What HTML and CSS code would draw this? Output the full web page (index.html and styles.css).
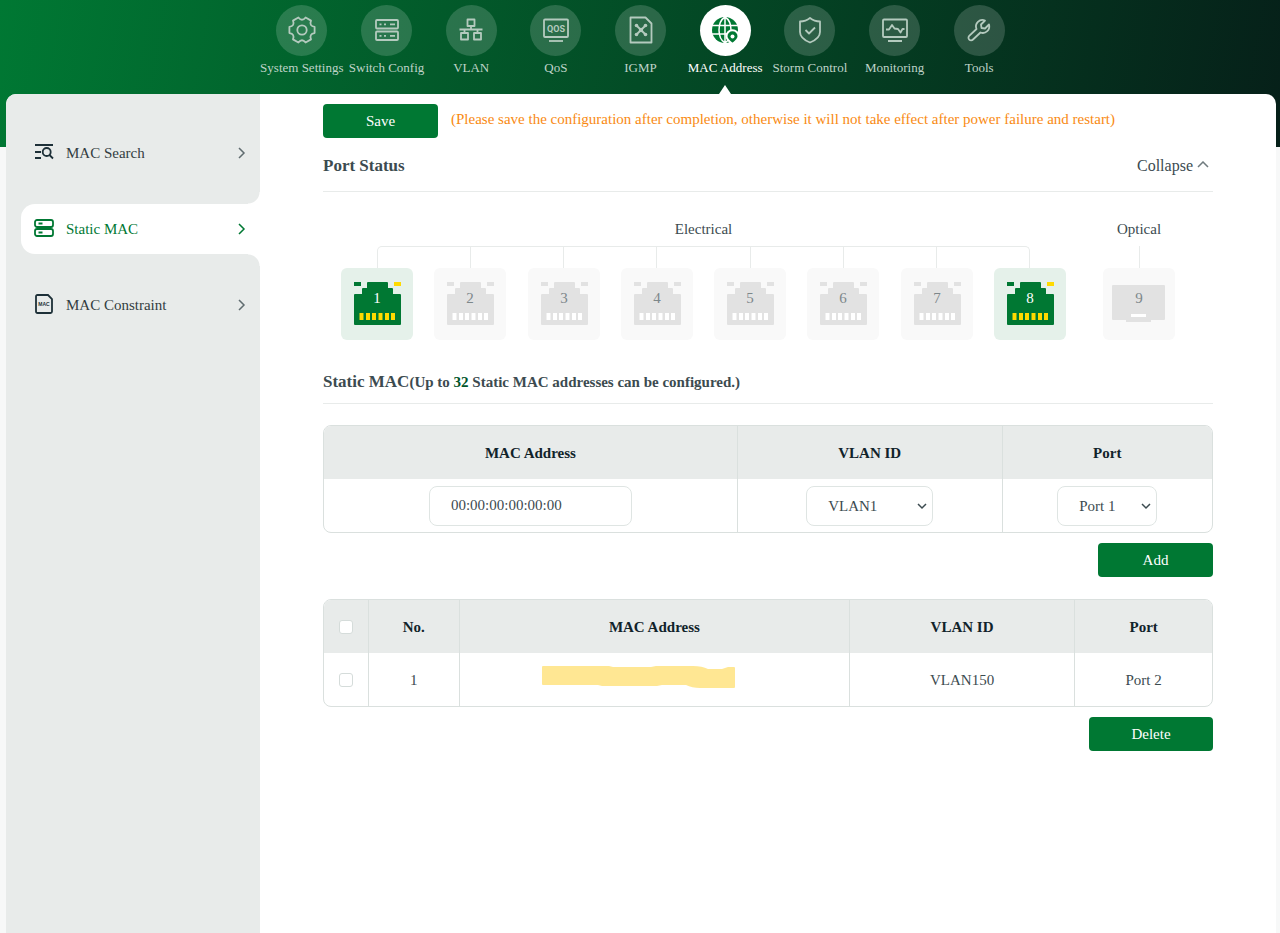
FILE: index.html
```html
<!DOCTYPE html>
<html lang="en">
<head>
<meta charset="utf-8">
<title>Static MAC</title>
<link rel="stylesheet" href="styles.css">
</head>
<body>
<svg class="defs" aria-hidden="true">
  <symbol id="port" viewBox="0 0 72 72">
    <rect class="led-left" x="13" y="14" width="7" height="4"/>
    <rect class="led-right" x="53" y="14" width="7" height="4"/>
    <path class="jack" d="M26 15q0-1 1-1h19q1 0 1 1v5h4q1 0 1 1v5h7q1 0 1 1v29q0 1-1 1H14q-1 0-1-1V27q0-1 1-1h7v-5q0-1 1-1h4z"/>
    <path class="pins" d="M18.500 45h4v7h-4zM25 45h4v7h-4zM31 45h4v7h-4zM37.500 45h4v7h-4zM44 45h4v7h-4zM50 45h4v7h-4z"/>
  </symbol>
</svg>
<header class="top">
  <nav class="menu" aria-label="Main">
    <a class="menu-item" href="#"><span class="disc"><svg viewBox="-14 -14 28 28"><path d="M12.600 3.100Q6.900 4 9 9.350L3.600 12.500Q0 8-3.600 12.500L-9 9.350Q-6.900 4-12.600 3.100V-3.100Q-6.900-4-9-9.350L-3.600-12.500Q0-8 3.600-12.500L9-9.350Q6.900-4 12.600-3.100Z"/><circle r="4.700"/></svg></span>System Settings</a>
    <a class="menu-item" href="#"><span class="disc"><svg viewBox="0 0 28 28"><rect x="3" y="4" width="22" height="8.500" rx="1"/><rect x="3" y="15.500" width="22" height="8.500" rx="1"/><path d="M6.500 8.300h2M11 8.300h2M17 8.300h5M6.500 19.800h2M11 19.800h2M17 19.800h5"/></svg></span>Switch Config</a>
    <a class="menu-item" href="#"><span class="disc"><svg viewBox="0 0 28 28"><path d="M10.500 3.500h7V10h-7zM4 17h7v6.500H4zM17 17h7v6.500h-7zM14 10v3.500M2.500 13.500h23M7.500 13.500V17M20.500 13.500V17"/></svg></span>VLAN</a>
    <a class="menu-item" href="#"><span class="disc"><svg viewBox="0 0 28 28"><rect x="2" y="3.500" width="24" height="17.500" rx="1"/><path d="M7 25h14"/><text class="qos" x="14" y="15.500">QOS</text></svg></span>QoS</a>
    <a class="menu-item" href="#"><span class="disc"><svg viewBox="0 0 28 28"><path d="M3.500 1.500h15l6 6v19h-21z"/><path d="M9.500 9.500l9 9M18.500 9.500l-9 9"/><g class="solid"><circle cx="9.500" cy="9.500" r="1.800"/><circle cx="18.500" cy="9.500" r="1.800"/><circle cx="9.500" cy="18.500" r="1.800"/><circle cx="18.500" cy="18.500" r="1.800"/><circle cx="14" cy="14" r="2.200"/></g></svg></span>IGMP</a>
    <a class="menu-item current" href="#" aria-current="page"><span class="disc"><svg viewBox="0 0 28 28"><circle class="globe" cx="14" cy="14" r="13"/><path class="grid" d="M0 9.500h28M0 18h28M14 0v28M14 1C6 6 6 22 14 27M14 1c8 5 8 21 0 26"/><path class="pin" d="M21.500 28c-2.500-1.800-6-4.200-6-7.700a6 6 0 0 1 12 0c0 3.500-3.500 5.900-6 7.700z"/><circle class="hole" cx="21.500" cy="20.500" r="2"/></svg></span>MAC Address</a>
    <a class="menu-item" href="#"><span class="disc"><svg viewBox="0 0 28 28"><path d="M14 2c3 2.500 6 3.500 10 3.500V16c0 5-5 8.500-10 10.500C9 24.500 4 21 4 16V5.500C8 5.500 11 4.500 14 2zM9.500 14l3.500 3.500 6-6"/></svg></span>Storm Control</a>
    <a class="menu-item" href="#"><span class="disc"><svg viewBox="0 0 28 28"><rect x="2" y="3.500" width="24" height="17.500" rx="1"/><path d="M7 25h14M5 13.500h3l3-4.500 2.500 3.500 3.500.5 2.500 3.500 2-3.500h2"/></svg></span>Monitoring</a>
    <a class="menu-item" href="#"><span class="disc"><svg viewBox="0 0 28 28"><path d="M20 4.500l-4 4 .5 3.500 3.500.5 4-4a6.500 6.500 0 0 1-8.500 8L8 23.500a2.500 2.500 0 0 1-3.800-3.700L11.500 13A6.500 6.500 0 0 1 20 4.500z"/></svg></span>Tools</a>
  </nav>
</header>
<div class="panel">
  <aside class="side">
    <a class="side-item" href="#"><svg class="icon" viewBox="0 0 20 20"><path d="M1 3h18M1 10h6M1 16h6M15.500 13l3.500 3.500"/><circle cx="12.700" cy="10" r="4"/></svg><span>MAC Search</span><svg class="arrow" viewBox="0 0 10 12"><path d="M2 1l5 5-5 5"/></svg></a>
    <a class="side-item active" href="#" aria-current="page"><svg class="icon" viewBox="0 0 20 20"><rect x="1" y="2" width="18" height="7" rx="2"/><rect x="1" y="11" width="18" height="7" rx="2"/><path d="M4.500 5.500h4M4.500 14.500h4"/></svg><span>Static MAC</span><svg class="arrow" viewBox="0 0 10 12"><path d="M2 1l5 5-5 5"/></svg></a>
    <a class="side-item" href="#"><svg class="icon" viewBox="0 0 20 20"><path d="M3.500 1H14l4 4v12.500q0 1.500-1.500 1.500h-13Q2 19 2 17.500v-15Q2 1 3.500 1z"/><text class="mac" x="10" y="12">MAC</text></svg><span>MAC Constraint</span><svg class="arrow" viewBox="0 0 10 12"><path d="M2 1l5 5-5 5"/></svg></a>
  </aside>
  <main class="main">
    <div class="save-row"><button class="btn" type="button">Save</button><p class="notice">(Please save the configuration after completion, otherwise it will not take effect after power failure and restart)</p></div>
    <div class="head"><h2>Port Status</h2><button class="collapse" type="button">Collapse<svg viewBox="0 0 12 8"><path d="M1 6l5-5 5 5"/></svg></button></div>
    <div class="ports">
      <section class="electrical">
        <h3>Electrical</h3>
        <div class="bracket"><i></i><i></i><i></i><i></i><i></i><i></i></div>
        <div class="tiles">
          <svg class="tile up" viewBox="0 0 72 72"><use href="#port"/><text x="36" y="35">1</text></svg>
          <svg class="tile" viewBox="0 0 72 72"><use href="#port"/><text x="36" y="35">2</text></svg>
          <svg class="tile" viewBox="0 0 72 72"><use href="#port"/><text x="36" y="35">3</text></svg>
          <svg class="tile" viewBox="0 0 72 72"><use href="#port"/><text x="36" y="35">4</text></svg>
          <svg class="tile" viewBox="0 0 72 72"><use href="#port"/><text x="36" y="35">5</text></svg>
          <svg class="tile" viewBox="0 0 72 72"><use href="#port"/><text x="36" y="35">6</text></svg>
          <svg class="tile" viewBox="0 0 72 72"><use href="#port"/><text x="36" y="35">7</text></svg>
          <svg class="tile up" viewBox="0 0 72 72"><use href="#port"/><text x="36" y="35">8</text></svg>
        </div>
      </section>
      <section class="optical">
        <h3>Optical</h3>
        <div class="stem"></div>
        <svg class="tile" viewBox="0 0 72 72"><path class="jack" d="M10 17h51q1 0 1 1v33q0 1-1 1H48v2H23v-2H10q-1 0-1-1V18q0-1 1-1z"/><path class="pins" d="M28 46h15v3H28z"/><text x="36" y="35">9</text></svg>
      </section>
    </div>
    <div class="head static-head"><h2>Static MAC<small>(Up to <b>32</b> Static MAC addresses can be configured.)</small></h2></div>
    <table class="grid-table form-table">
      <colgroup><col class="w-mac"><col class="w-vlan"><col></colgroup>
      <thead><tr><th>MAC Address</th><th>VLAN ID</th><th>Port</th></tr></thead>
      <tbody><tr>
        <td><input class="field" type="text" value="00:00:00:00:00:00" aria-label="MAC Address"></td>
        <td><span class="pick"><select class="field vlan" aria-label="VLAN ID"><option>VLAN1</option><option>VLAN150</option></select><svg viewBox="0 0 10 8"><path d="M1 2l4 4 4-4"/></svg></span></td>
        <td><span class="pick"><select class="field port-no" aria-label="Port"><option>Port 1</option><option>Port 2</option></select><svg viewBox="0 0 10 8"><path d="M1 2l4 4 4-4"/></svg></span></td>
      </tr></tbody>
    </table>
    <div class="actions"><button class="btn" type="button">Add</button></div>
    <table class="grid-table">
      <colgroup><col class="c-check"><col class="c-no"><col class="c-mac"><col class="c-vlan"><col></colgroup>
      <thead><tr><th><input class="check" type="checkbox" aria-label="Select all"></th><th>No.</th><th>MAC Address</th><th>VLAN ID</th><th>Port</th></tr></thead>
      <tbody><tr><td><input class="check" type="checkbox" aria-label="Select row 1"></td><td>1</td><td><svg class="marker" viewBox="0 0 225 24"><path d="M1 1h66l4 1h38l5-1h37q9 0 15 3h14l6-2h6q1 0 1 1v19q0 1-1 1h-34q-8 0-14-3h-24l-5 1H60l-4-1H1q-1 0-1-1V2q0-1 1-1z"/></svg></td><td>VLAN150</td><td>Port 2</td></tr></tbody>
    </table>
    <div class="actions"><button class="btn wide" type="button">Delete</button></div>
  </main>
</div>
</body>
</html>
```
FILE: styles.css
```css
* { box-sizing: border-box; }
body {
  margin: 0;
  min-height: 100vh;
  display: flex;
  flex-direction: column;
  background: #f7f8f8 linear-gradient(100deg, #007833, #062019) no-repeat top / 100% 147px;
  font: 15px/20px "Liberation Serif", "Times New Roman", serif;
  color: #3c4b50;
}
.defs { position: absolute; width: 0; height: 0; }
svg { fill: none; flex: none; }
h2, h3, p { margin: 0; }
a { color: inherit; text-decoration: none; }
button, input, select { font: inherit; color: inherit; }

.menu {
  display: flex;
  max-width: 763px;
  height: 94px;
  margin: 0 auto;
  padding: 5px 0 0 1px;
}
.menu-item {
  flex: 1;
  display: flex;
  flex-direction: column;
  align-items: center;
  gap: 2px;
  font-size: 13px;
  white-space: nowrap;
  color: #bfd3c8;
}
.disc {
  display: grid;
  place-items: center;
  width: 51px;
  height: 51px;
  padding-bottom: 1px;
  border-radius: 50%;
  background: rgba(255, 255, 255, .16);
}
.disc svg {
  width: 28px;
  height: 28px;
  stroke: #b4cabe;
  stroke-width: 1.800;
  stroke-linejoin: round;
  overflow: visible;
}
.disc .solid { fill: #b4cabe; stroke: none; }
.disc .qos {
  font: bold 9px Roboto, sans-serif;
  fill: #b4cabe;
  stroke: none;
  text-anchor: middle;
}
.current { color: #fff; }
.current .disc { background: #fff; }
.current::after {
  content: "";
  margin-top: auto;
  border: 6px solid transparent;
  border-top: 0;
  border-bottom: 9px solid #fff;
}
.disc .globe { fill: #007833; stroke: none; }
.disc .grid { stroke: #fff; stroke-width: 1.500; }
.disc .pin { fill: #007833; stroke: #fff; stroke-width: 2; }
.disc .hole { fill: #fff; stroke: none; }

.panel {
  flex: 1;
  display: flex;
  margin: 0 4px 0 6px;
  border-radius: 10px 10px 0 0;
  background: #fff;
  overflow: hidden;
}
.side {
  width: 254px;
  flex: none;
  display: flex;
  flex-direction: column;
  gap: 26px;
  padding: 34px 0 0 15px;
  background: #e8ebea;
}
.side-item {
  position: relative;
  display: flex;
  align-items: center;
  gap: 12px;
  height: 50px;
  padding: 0 13px;
  color: #333d41;
}
.side-item span { flex: 1; }
.icon { width: 20px; height: 20px; margin-bottom: 2px; stroke: #1d3038; stroke-width: 1.800; }
.arrow { width: 10px; height: 12px; stroke: #606c70; stroke-width: 1.500; }
.side-item .mac {
  font: bold 5px "Liberation Sans", sans-serif;
  fill: #1d3038;
  stroke: none;
  text-anchor: middle;
}
.active { background: #fff; color: #007833; border-radius: 14px 0 0 14px; }
.active svg { stroke: #007833; }
.active::before, .active::after {
  content: "";
  position: absolute;
  right: 0;
  width: 12px;
  height: 12px;
}
.active::before { top: -12px; background: radial-gradient(circle at 0 0, transparent 11px, #fff 12px); }
.active::after { bottom: -12px; background: radial-gradient(circle at 0 100%, transparent 11px, #fff 12px); }

.main { flex: 1; padding: 10px 63px 24px; }
.save-row { display: flex; gap: 13px; }
.notice { padding-top: 5px; color: #f98a12; }
.btn {
  min-width: 115px;
  height: 34px;
  border: 0;
  border-radius: 4px;
  background: #007833;
  color: #fff;
}
.wide { min-width: 124px; }
.head {
  display: flex;
  justify-content: space-between;
  align-items: center;
  height: 54px;
  padding-top: 2px;
  border-bottom: 1px solid #e8ebea;
}
h2 { font-size: 17px; line-height: 20px; color: #3c4b50; }
h2 small { font-size: 15px; }
h2 b { color: #00552a; }
.collapse {
  display: flex;
  align-items: center;
  gap: 4px;
  padding: 0 4px 0 0;
  border: 0;
  background: none;
  font-size: 16px;
}
.collapse svg { width: 12px; height: 8px; margin-bottom: 2px; stroke: #707b7f; stroke-width: 1.500; }
.ports {
  display: flex;
  gap: 37px;
  padding: 27px 38px 21px 18px;
}
.electrical { flex: 1; }
h3 { font-size: 15px; font-weight: normal; line-height: 20px; text-align: center; }
.bracket {
  display: flex;
  justify-content: space-evenly;
  height: 22px;
  margin: 7px 36px 0;
  border: 1px solid #e8ebea;
  border-bottom: 0;
  border-radius: 5px 5px 0 0;
}
.bracket i, .stem { width: 1px; height: 21px; background: #e8ebea; }
.stem { height: 22px; margin: 7px auto 0; }
.tiles { display: flex; justify-content: space-between; }
.tile {
  display: block;
  width: 72px;
  height: 72px;
  border-radius: 6px;
  background: #f9f9f9;
  --body: #e2e2e2;
  --pin: #fff;
  --led: #e2e2e2;
}
.up { background: #e5f1ea; --body: #007833; --pin: #ffda00; --led: #ffda00; }
.tile text { font-size: 15px; fill: #7d878a; text-anchor: middle; }
.up text { fill: #fff; }
.jack, .led-left { fill: var(--body); }
.led-right { fill: var(--led); }
.pins { fill: var(--pin); }

.static-head { height: 43px; margin-bottom: 21px; padding-top: 0; }
.grid-table {
  width: 100%;
  table-layout: fixed;
  border: 1px solid #dae0de;
  border-radius: 8px;
  border-spacing: 0;
  overflow: hidden;
}
.grid-table th, .grid-table td { height: 53px; padding: 0; text-align: center; }
.grid-table th { background: #e8ebea; color: #11232a; }
.grid-table th + th, .grid-table td + td { border-left: 1px solid #dae0de; }
.w-mac { width: 46.500%; }
.w-vlan { width: 29.800%; }
.c-check { width: 4.900%; }
.c-no { width: 10.300%; }
.c-mac { width: 43.900%; }
.c-vlan { width: 25.400%; }
.field {
  width: 203px;
  height: 40px;
  padding: 0 21px;
  border: 1px solid #dfe5e3;
  border-radius: 8px;
  background: #fff;
  appearance: none;
}
.pick { display: inline-grid; align-items: center; justify-items: end; }
.pick > * { grid-area: 1 / 1; }
.pick svg { width: 10px; height: 8px; margin-right: 6px; stroke: #3c4b50; stroke-width: 1.500; pointer-events: none; }
.vlan { width: 127px; }
.port-no { width: 100px; }
.actions { display: flex; justify-content: flex-end; margin: 10px 0 22px; }
.check {
  display: block;
  width: 14px;
  height: 14px;
  margin: 0 auto;
  border: 1px solid #d5dcda;
  border-radius: 3px;
  background: #fff;
  appearance: none;
}
.check:checked { background: #007833; }
.marker { display: block; width: 225px; height: 24px; margin: 0 auto 6px; fill: #ffe793; }
```
